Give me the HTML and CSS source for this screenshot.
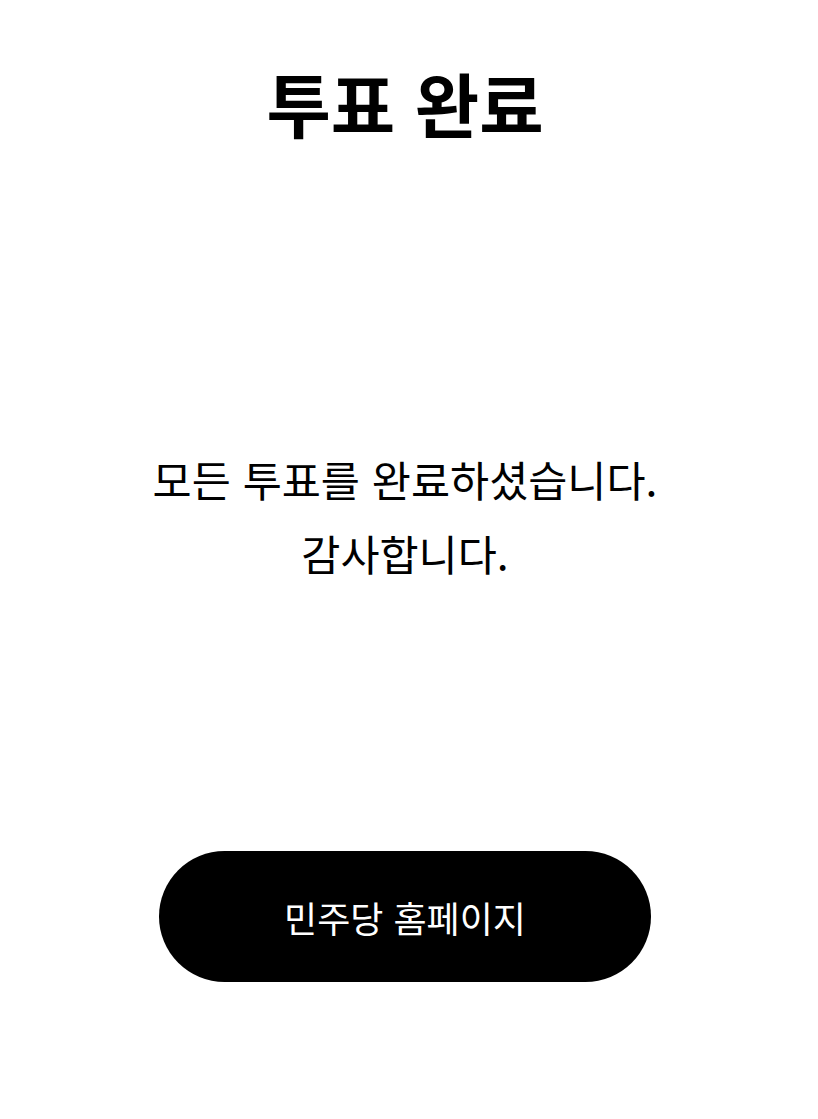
FILE: index.html
```html
<!DOCTYPE html>
<html lang="ko">
<head>
<meta charset="utf-8">
<title>투표 완료</title>
<link rel="stylesheet" href="styles.css">
</head>
<body>
<main class="page">
  <h1 class="title">투표 완료</h1>
  <p class="message">모든 투표를 완료하셨습니다.<br>감사합니다.</p>
  <a class="home-button" href="#">민주당 홈페이지</a>
</main>
</body>
</html>
```

FILE: styles.css
```css
html, body {
  margin: 0;
  padding: 0;
  background: #ffffff;
}

body {
  font-family: "Noto Sans CJK KR", "Noto Sans", sans-serif;
  color: #000000;
}

.page {
  width: 810px;
  height: 1119px;
  display: flex;
  flex-direction: column;
  align-items: center;
  box-sizing: border-box;
  padding-top: 68px;
}

.title {
  margin: 0;
  font-size: 70px;
  font-weight: 700;
  line-height: 70px;
  letter-spacing: 0;
}

.message {
  margin: 304px 0 0;
  font-size: 42.5px;
  font-weight: 400;
  line-height: 74px;
  text-align: center;
}

.home-button {
  margin-top: 261px;
  width: 492px;
  height: 131px;
  border-radius: 66px;
  background: #000000;
  color: #ffffff;
  display: flex;
  align-items: center;
  justify-content: center;
  font-size: 36px;
  text-decoration: none;
}
```
